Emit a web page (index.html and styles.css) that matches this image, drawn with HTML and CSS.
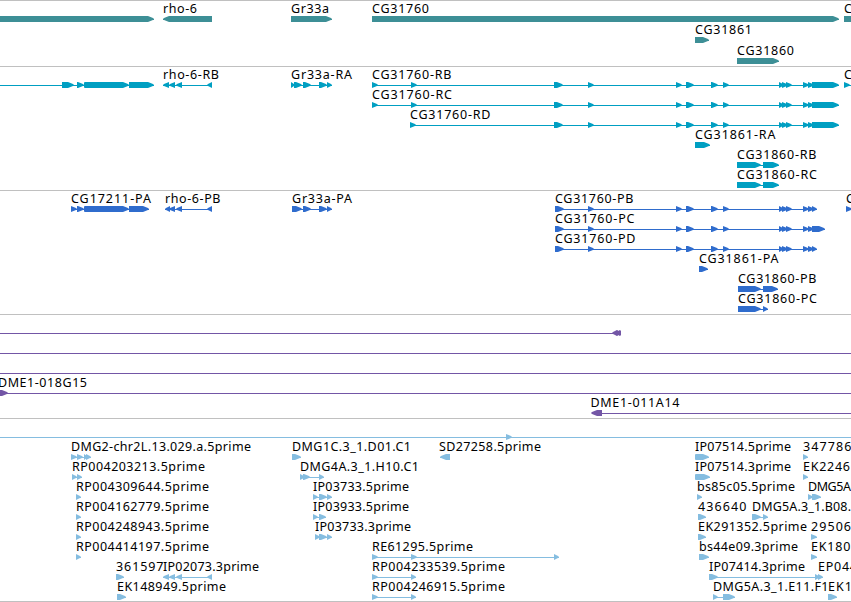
FILE: index.html
```
<!DOCTYPE html>
<html lang="en">
<head>
  <meta charset="UTF-8">
  <title>Genome tracks</title>
  <link rel="stylesheet" href="styles.css">
</head>
<body>
  <main class="browser" id="browser"></main>
  <script src="tracks.js"></script>
</body>
</html>
```

FILE: styles.css
```
body {
  margin: 0;
  background: #fff;
  color: #000;
  overflow: hidden;
}

.browser {
  display: flex;
  flex-direction: column;
  width: 851px;
}

.track {
  box-sizing: border-box;
  border-top: 1px solid #c0c0c0;
}

.track:last-child {
  border-bottom: 1px solid #c0c0c0;
}

.track svg {
  display: block;
  width: 851px;
}

.label {
  font-family: "Noto Sans", "DejaVu Sans", sans-serif;
  font-size: 12.5px;
  fill: #000;
}

.genes { color: #3d8f96; }
.transcripts { color: #009fc2; }
.proteins { color: #2f6ccd; }
.clones { color: #7356a6; }
.ests { color: #85bde0; }

.exon, .intron {
  fill: currentColor;
}
```

FILE: tracks.js
```
const SVG = "http://www.w3.org/2000/svg";

// shared exons
const tail = [[588,594],[676,682],[686,694],[711,718],[723,729],[779,784],[782,788],[786,792],[803,809],[808,814]];
const mrna = [[554,563], ...tail, [812,839]];
const cds = [[555,564], ...tail];
const rho = [[169,175],[176,182],[207,212]];

// feature: [row, label, label x, label width, exons, reverse, line start, line end]
const tracks = [
  { name: "genes", height: 65, pitch: 21, features: [
    [0, "", 0, 0, [[-10,154]]],
    [0, "rho-6", 163, 34, [[163,212]], true],
    [0, "Gr33a", 291, 38, [[291,332]]],
    [0, "CG31760", 372, 57, [[372,839]]],
    [0, "C", 844, 8.5, [[844,870]]],
    [1, "CG31861", 695, 57, [[695,709]]],
    [2, "CG31860", 737, 57, [[737,779]]]
  ]},
  { name: "transcripts", height: 123, pitch: 20, features: [
    [0, "", 0, 0, [[62,74],[77,84],[84,86],[85,129],[129,154]], false, 0, 154],
    [0, "rho-6-RB", 163, 56, [[163,169], ...rho], true],
    [0, "Gr33a-RA", 291, 61, [[291,295],[294,302],[303,311],[319,327],[327,332]]],
    [0, "CG31760-RB", 372, 79.5, [[372,378],[411,417], ...mrna]],
    [0, "C", 844, 8.5, [[844,850]], false, 844, 851],
    [1, "CG31760-RC", 372, 80, [[372,378],[411,417], ...mrna]],
    [2, "CG31760-RD", 410, 80.5, [[410,416], ...mrna]],
    [3, "CG31861-RA", 695, 80.5, [[695,710]]],
    [4, "CG31860-RB", 737, 79.5, [[737,761],[763,779]]],
    [5, "CG31860-RC", 737, 80, [[737,761],[763,779]]]
  ]},
  { name: "proteins", height: 123, pitch: 20, features: [
    [0, "CG17211-PA", 71, 80, [[71,77],[77,84],[84,86],[85,129],[129,149]]],
    [0, "rho-6-PB", 165, 55.5, [[165,170], ...rho], true],
    [0, "Gr33a-PA", 292, 60, [[292,302],[303,311],[319,327],[327,332]]],
    [0, "CG31760-PB", 555, 78.5, [...cds, [812,817]]],
    [0, "C", 846, 8.5, [[846,852]]],
    [1, "CG31760-PC", 555, 79.5, [...cds, [812,825]]],
    [2, "CG31760-PD", 555, 80.5, [...cds, [812,817]]],
    [3, "CG31861-PA", 699, 79.5, [[699,708]]],
    [4, "CG31860-PB", 738, 78.5, [[738,761],[763,778]]],
    [5, "CG31860-PC", 738, 79, [[738,761],[763,768]]]
  ]},
  { name: "clones", height: 103, pitch: 20, features: [
    [0, "", 0, 0, [[612,617],[616,618],[618,620],[620,621]], true, 0, 621],
    [1, "", 0, 0, [], false, 0, 851],
    [2, "", 0, 0, [], false, 0, 851],
    [3, "DME1-018G15", -2, 89, [[-4,8]], false, 0, 851],
    [4, "DME1-011A14", 590.5, 89, [[591,602]], true, 596, 851]
  ]},
  { name: "ests", height: 182, pitch: 20, features: [
    [0, "", 0, 0, [[506,512]], false, 0, 851],
    [1, "DMG2-chr2L.13.029.a.5prime", 71, 180, [[71,77],[77,83],[84,88],[86,91]]],
    [1, "DMG1C.3_1.D01.C1", 292, 119, [[292,301]]],
    [1, "SD27258.5prime", 439, 102, [[440,450]], true],
    [1, "IP07514.5prime", 695, 96, [[695,697],[696,709]]],
    [1, "347786", 803, 48.5, [[803,808]]],
    [2, "RP004203213.5prime", 72, 133, [[72,77],[77,82]]],
    [2, "DMG4A.3_1.H10.C1", 300, 119, [[300,305],[303,310],[319,324]]],
    [2, "IP07514.3prime", 695, 96, [[695,697],[696,710]]],
    [2, "EK2246", 803, 47, [[803,808]]],
    [3, "RP004309644.5prime", 76, 133, [[76,81]]],
    [3, "IP03733.5prime", 313, 96, [[313,318],[319,327],[327,332]]],
    [3, "bs85c05.5prime", 697, 98, [[697,702]]],
    [3, "DMG5A", 808, 43, [[808,813],[812,821]]],
    [4, "RP004162779.5prime", 76, 133, [[76,81]]],
    [4, "IP03933.5prime", 313, 96, [[313,318],[319,326]]],
    [4, "436640", 698, 48.5, [[698,706]]],
    [4, "DMG5A.3_1.B08.", 752, 99, [[752,761],[763,768]]],
    [5, "RP004248943.5prime", 76, 133, [[76,81]]],
    [5, "IP03733.3prime", 315, 96, [[315,320],[319,327],[327,332]]],
    [5, "EK291352.5prime", 698, 109, [[698,706]]],
    [5, "29506", 811, 40, [[811,817]]],
    [6, "RP004414197.5prime", 76, 133, [[76,81]]],
    [6, "RE61295.5prime", 372, 101, [[372,378],[411,417],[554,559]]],
    [6, "bs44e09.3prime", 699, 99, [[699,709]]],
    [6, "EK180", 811, 39.5, [[811,817]]],
    [7, "361597", 116, 47.5, [[116,124]]],
    [7, "IP02073.3prime", 163, 96, [[163,169], ...rho], true],
    [7, "RP004233539.5prime", 372, 133, [[372,378],[411,416]]],
    [7, "IP07414.3prime", 709, 96, [[709,718],[815,820]]],
    [7, "EP044", 818, 39, [[818,823]]],
    [8, "EK148949.5prime", 117, 109, [[117,126]]],
    [8, "RP004246915.5prime", 372, 133, [[372,378],[411,416]]],
    [8, "DMG5A.3_1.E11.F1", 713, 115.5, [[713,718],[723,735]]],
    [8, "EK1", 828, 24, [[828,837]]]
  ]}
];

function add(parent, tag, attrs) {
  const el = document.createElementNS(SVG, tag);
  for (const key in attrs) el.setAttribute(key, attrs[key]);
  parent.appendChild(el);
  return el;
}

function exonPath(a, b, y, reverse) {
  const head = Math.min(6, b - a);
  const tip = reverse ? a : b;
  const back = reverse ? b : a;
  const dir = reverse ? 1 : -1;
  const neck = tip + dir * head;
  // very short exons keep almost their full height
  const cut = head > 3 ? 2 : 1;
  const nose = tip + dir * (head > 3 ? 1 : 0);
  return `M${back} ${y}H${neck}L${nose} ${y + cut}L${tip} ${y + 3}L${nose} ${y + 6 - cut}L${neck} ${y + 6}H${back}Z`;
}

tracks.forEach(track => {
  const section = document.createElement("section");
  section.className = "track " + track.name;
  const svg = add(section, "svg", { height: track.height });

  track.features.forEach(([row, name, x, width, exons, reverse, from, to]) => {
    const y = 15 + row * track.pitch;
    const start = from ?? exons[0][0];
    const end = to ?? exons[exons.length - 1][1];
    add(svg, "rect", { class: "intron", x: start, y: y + 3, width: end - start, height: 1 });
    exons.forEach(([a, b]) => add(svg, "path", { class: "exon", d: exonPath(a, b, y, reverse) }));
    if (name) {
      add(svg, "text", { class: "label", x: x, y: y - 3, textLength: width }).textContent = name;
    }
  });

  document.getElementById("browser").appendChild(section);
});
```
